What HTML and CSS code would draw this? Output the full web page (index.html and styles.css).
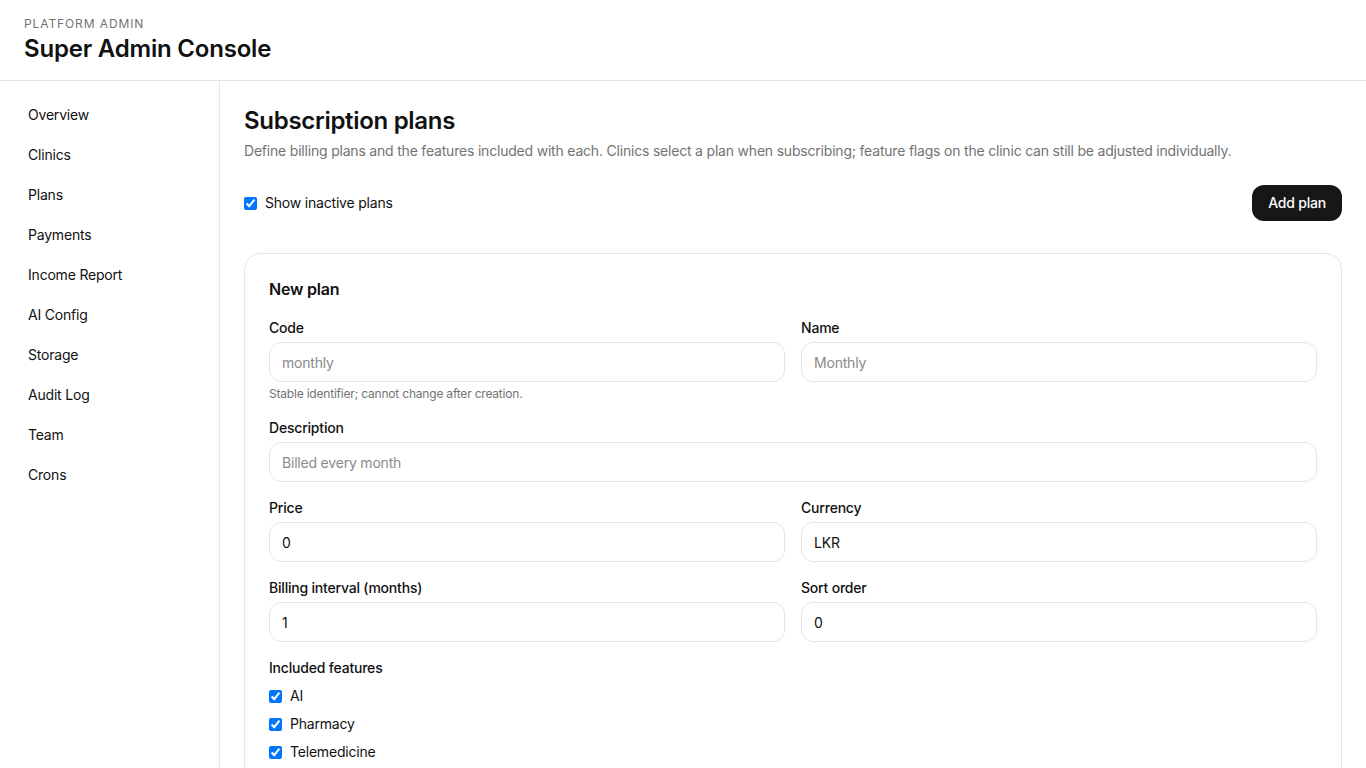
FILE: index.html
```html
<!DOCTYPE html>
<html lang="en">
<head>
  <meta charset="UTF-8" />
  <meta name="viewport" content="width=device-width, initial-scale=1.0" />
  <title>Super Admin Console</title>
  <link rel="stylesheet" href="styles.css">
</head>
<body>

  <header class="topbar">
    <div class="eyebrow">Platform Admin</div>
    <h1>Super Admin Console</h1>
  </header>

  <div class="layout">
    <nav class="sidebar">
      <a href="#">Overview</a>
      <a href="#">Clinics</a>
      <a href="#">Plans</a>
      <a href="#">Payments</a>
      <a href="#">Income Report</a>
      <a href="#">AI Config</a>
      <a href="#">Storage</a>
      <a href="#">Audit Log</a>
      <a href="#">Team</a>
      <a href="#">Crons</a>
    </nav>

    <main class="content">
      <h2>Subscription plans</h2>
      <p class="lead">Define billing plans and the features included with each. Clinics select a plan when subscribing; feature flags on the clinic can still be adjusted individually.</p>

      <div class="toolbar">
        <label class="check">
          <input type="checkbox" checked />
          Show inactive plans
        </label>
        <button type="button" class="btn-dark">Add plan</button>
      </div>

      <form class="card">
        <h3>New plan</h3>

        <div class="grid">
          <div class="field">
            <label for="code">Code</label>
            <input type="text" id="code" placeholder="monthly" />
            <small>Stable identifier; cannot change after creation.</small>
          </div>
          <div class="field">
            <label for="name">Name</label>
            <input type="text" id="name" placeholder="Monthly" />
          </div>

          <div class="field wide">
            <label for="desc">Description</label>
            <input type="text" id="desc" placeholder="Billed every month" />
          </div>

          <div class="field">
            <label for="price">Price</label>
            <input type="text" id="price" value="0" />
          </div>
          <div class="field">
            <label for="currency">Currency</label>
            <input type="text" id="currency" value="LKR" />
          </div>

          <div class="field">
            <label for="interval">Billing interval (months)</label>
            <input type="text" id="interval" value="1" />
          </div>
          <div class="field">
            <label for="sort">Sort order</label>
            <input type="text" id="sort" value="0" />
          </div>
        </div>

        <div class="features">
          <div class="features-title">Included features</div>
          <label class="check"><input type="checkbox" checked /> AI</label>
          <label class="check"><input type="checkbox" checked /> Pharmacy</label>
          <label class="check"><input type="checkbox" checked /> Telemedicine</label>
        </div>
      </form>
    </main>
  </div>

</body>
</html>
```

FILE: styles.css
```css
body {
  margin: 0;
  font-family: Inter, "Noto Sans", sans-serif;
  color: #111;
  background: #fff;
  font-size: 14px;
  line-height: 20px;
  letter-spacing: -0.2px;
}


.topbar {
  padding: 17px 24px 15px;
  border-bottom: 1px solid #e5e5e5;
}

.eyebrow {
  font-size: 12px;
  line-height: 14px;
  letter-spacing: 0.9px;
  text-transform: uppercase;
  color: #737373;
}

.topbar h1 {
  margin: 2px 0 0;
  font-size: 24px;
  line-height: 32px;
  font-weight: 600;
  letter-spacing: -0.2px;
}


.layout {
  display: flex;
  min-height: calc(100vh - 81px);
}

.sidebar {
  width: 220px;
  flex-shrink: 0;
  border-right: 1px solid #e5e5e5;
  padding: 14px 16px;
  box-sizing: border-box;
  display: flex;
  flex-direction: column;
}

.sidebar a {
  display: block;
  padding: 10px 12px;
  color: #111;
  text-decoration: none;
}


.content {
  flex: 1;
  padding: 24px;
}

.content h2 {
  margin: 0;
  font-size: 24px;
  line-height: 32px;
  font-weight: 600;
  letter-spacing: -0.3px;
}

.lead {
  margin: 4px 0 0;
  color: #737373;
}

.toolbar {
  margin-top: 24px;
  display: flex;
  align-items: center;
  justify-content: space-between;
}

.check {
  display: flex;
  align-items: center;
  gap: 8px;
}

.check input {
  margin: 0;
  width: 13px;
  height: 13px;
}

.btn-dark {
  font: inherit;
  font-weight: 500;
  letter-spacing: inherit;
  background: #171717;
  color: #fff;
  border: none;
  border-radius: 12px;
  padding: 8px 16px;
  height: 36px;
  cursor: pointer;
}


.card {
  margin-top: 32px;
  border: 1px solid #e5e5e5;
  border-radius: 16px;
  padding: 23px 24px;
}

.card h3 {
  margin: 0 0 17px;
  font-size: 16px;
  line-height: 24px;
  font-weight: 600;
}

.grid {
  display: grid;
  grid-template-columns: 1fr 1fr;
  gap: 16px;
}

.field {
  display: flex;
  flex-direction: column;
}

.field.wide {
  grid-column: 1 / -1;
}

.field label {
  font-weight: 500;
  margin-bottom: 4px;
}

.field input {
  font: inherit;
  letter-spacing: inherit;
  color: #111;
  height: 40px;
  box-sizing: border-box;
  padding: 0 12px;
  border: 1px solid #e5e5e5;
  border-radius: 12px;
  outline: none;
}

.field input::placeholder {
  color: #8a8a8a;
}

.field small {
  margin-top: 4px;
  font-size: 12px;
  line-height: 16px;
  color: #737373;
}


.features {
  margin-top: 16px;
  display: flex;
  flex-direction: column;
  gap: 8px;
}

.features-title {
  font-weight: 500;
}
```
